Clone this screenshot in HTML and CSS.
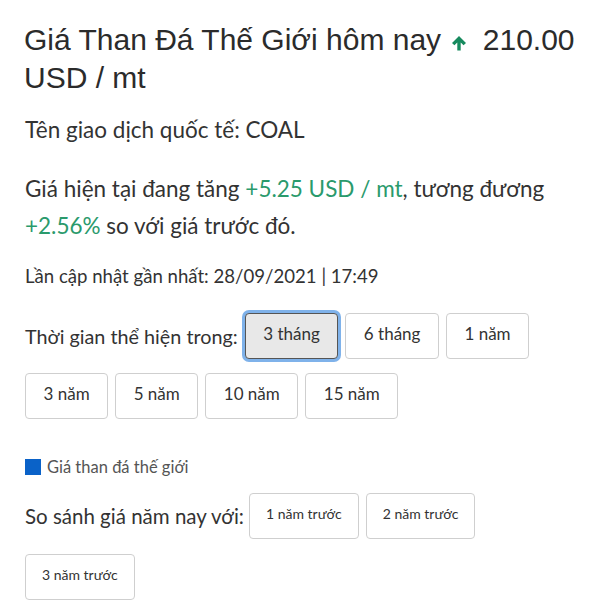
FILE: index.html
```html
<!DOCTYPE html>
<html lang="vi">
<head>
<meta charset="utf-8">
<link rel="stylesheet" href="styles.css">
</head>
<body>
<div class="page">
  <h1 class="title">Giá Than Đá Thế Giới hôm nay <svg class="arrow" viewBox="0 0 16 16" width="16" height="16"><path d="M8 1 L15 8 L12.6 10.3 L9.7 7.4 V15.5 H6.3 V7.4 L3.4 10.3 L1 8 Z" fill="#178a5e"/></svg> <span class="price">210.00</span> USD / mt</h1>
  <p class="code">Tên giao dịch quốc tế: COAL</p>
  <p class="change">Giá hiện tại đang tăng <span class="up">+5.25 USD / mt</span>, tương đương <span class="up">+2.56%</span> so với giá trước đó.</p>
  <p class="updated">Lần cập nhật gần nhất: 28/09/2021 | 17:49</p>
  <div class="period">
    <span class="label">Thời gian thể hiện trong:</span>
    <button class="btn active">3 tháng</button>
    <button class="btn">6 tháng</button>
    <button class="btn">1 năm</button>
    <button class="btn">3 năm</button>
    <button class="btn">5 năm</button>
    <button class="btn">10 năm</button>
    <button class="btn">15 năm</button>
  </div>
  <div class="legend"><span class="swatch"></span>Giá than đá thế giới</div>
  <div class="compare">
    <span class="label wide">So sánh giá năm nay với:</span>
    <button class="btn small">1 năm trước</button>
    <button class="btn small">2 năm trước</button>
    <button class="btn small">3 năm trước</button>
  </div>
</div>
</body>
</html>
```
FILE: styles.css
```css
html, body {
  margin: 0;
  padding: 0;
  background: #fff;
}
.page {
  padding: 21px 24px 0 25px;
  font-family: Lato, "Liberation Sans", sans-serif;
  color: #333;
}
.title {
  font-family: "Liberation Sans", Arial, sans-serif;
  font-weight: normal;
  font-size: 30px;
  line-height: 38px;
  color: #2b2b2b;
  margin: 0 0 0 -1px;
}
.arrow {
  vertical-align: -1px;
  margin: 0 5px 0 2px;
}
.price {
  margin-left: 2px;
}
.code {
  font-size: 22.5px;
  line-height: 28px;
  margin: 19px 0 0;
}
.change {
  font-size: 22.5px;
  line-height: 37px;
  margin: 26px 0 0;
}
.up {
  color: #2a9a6c;
}
.updated {
  font-size: 18.6px;
  line-height: 24px;
  margin: 20px 0 0;
}
.period, .compare {
  display: flex;
  flex-wrap: wrap;
  align-items: center;
  column-gap: 7px;
  row-gap: 14px;
}
.period {
  margin-top: 25px;
}
.label {
  font-size: 19.8px;
  margin-right: 0;
}
.label.wide {
  font-size: 20.5px;
  margin-right: -2px;
}
.btn {
  font-family: Lato, "Liberation Sans", sans-serif;
  font-size: 17px;
  color: #333;
  background: #fff;
  border: 1px solid #cfcfcf;
  border-radius: 4px;
  height: 46px;
  padding: 0 17.5px 6px;
  cursor: pointer;
}
.btn.active {
  background: #e8e8e8;
  border-color: #555;
  box-shadow: 0 0 0 3px #7fb2ea;
}
.btn.small {
  font-size: 14px;
  padding: 0 16px 6px;
}
.legend {
  display: flex;
  align-items: center;
  gap: 6px;
  font-size: 16.5px;
  color: #555;
  margin-top: 38px;
}
.swatch {
  width: 16px;
  height: 16px;
  background: #0a62c8;
  display: inline-block;
}
.compare {
  margin-top: 16px;
  row-gap: 15px;
}
```
